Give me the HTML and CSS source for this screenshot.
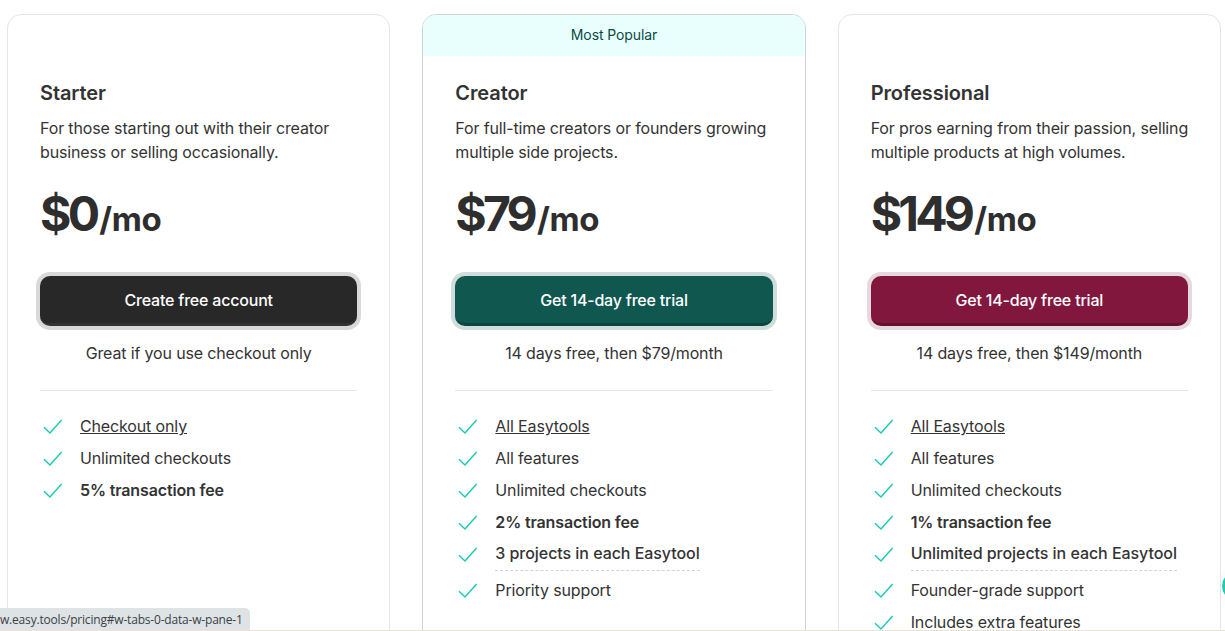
FILE: index.html
```html
<!DOCTYPE html>
<html lang="en">
<head>
<meta charset="utf-8">
<title>Pricing</title>
<link rel="stylesheet" href="styles.css">
</head>
<body>
<svg class="sprite" width="0" height="0" aria-hidden="true"><symbol id="check" viewBox="0 0 20 16"><path d="M1 8.2 7 14 18.6 1" fill="none" stroke="currentColor" stroke-width="1.5"/></symbol></svg>
<main class="plans">
  <section class="card">
    <div class="banner-slot"></div>
    <div class="body">
      <h2 class="name">Starter</h2>
      <p class="desc">For those starting out with their creator business or selling occasionally.</p>
      <div class="price"><span class="amount">$0</span><span class="per">/mo</span></div>
      <a class="btn btn-dark" href="#">Create free account</a>
      <p class="note">Great if you use checkout only</p>
      <hr class="rule">
      <ul class="feats">
        <li><svg class="tick"><use href="#check"/></svg><a class="ul" href="#">Checkout only</a></li>
        <li><svg class="tick"><use href="#check"/></svg><span>Unlimited checkouts</span></li>
        <li><svg class="tick"><use href="#check"/></svg><b>5% transaction fee</b></li>
      </ul>
    </div>
  </section>
  <section class="card popular">
    <div class="banner-slot banner">Most Popular</div>
    <div class="body">
      <h2 class="name">Creator</h2>
      <p class="desc">For full-time creators or founders growing multiple side projects.</p>
      <div class="price"><span class="amount">$79</span><span class="per">/mo</span></div>
      <a class="btn btn-teal" href="#">Get 14-day free trial</a>
      <p class="note">14 days free, then $79/month</p>
      <hr class="rule">
      <ul class="feats">
        <li><svg class="tick"><use href="#check"/></svg><a class="ul" href="#">All Easytools</a></li>
        <li><svg class="tick"><use href="#check"/></svg><span>All features</span></li>
        <li><svg class="tick"><use href="#check"/></svg><span>Unlimited checkouts</span></li>
        <li><svg class="tick"><use href="#check"/></svg><b>2% transaction fee</b></li>
        <li class="tip-row"><svg class="tick"><use href="#check"/></svg><span class="dashed">3 projects in each Easytool</span></li>
        <li class="after-tip"><svg class="tick"><use href="#check"/></svg><span>Priority support</span></li>
      </ul>
    </div>
  </section>
  <section class="card">
    <div class="banner-slot"></div>
    <div class="body">
      <h2 class="name">Professional</h2>
      <p class="desc">For pros earning from their passion, selling multiple products at high volumes.</p>
      <div class="price"><span class="amount">$149</span><span class="per">/mo</span></div>
      <a class="btn btn-maroon" href="#">Get 14-day free trial</a>
      <p class="note">14 days free, then $149/month</p>
      <hr class="rule">
      <ul class="feats">
        <li><svg class="tick"><use href="#check"/></svg><a class="ul" href="#">All Easytools</a></li>
        <li><svg class="tick"><use href="#check"/></svg><span>All features</span></li>
        <li><svg class="tick"><use href="#check"/></svg><span>Unlimited checkouts</span></li>
        <li><svg class="tick"><use href="#check"/></svg><b>1% transaction fee</b></li>
        <li class="tip-row"><svg class="tick"><use href="#check"/></svg><span class="dashed">Unlimited projects in each Easytool</span></li>
        <li class="after-tip"><svg class="tick"><use href="#check"/></svg><span>Founder-grade support</span></li>
        <li><svg class="tick"><use href="#check"/></svg><span>Includes extra features</span></li>
      </ul>
    </div>
  </section>
</main>
<div class="status">w.easy.tools/pricing#w-tabs-0-data-w-pane-1</div>
<div class="chat-dot"></div>
<div class="page-edge"></div>
</body>
</html>
```
FILE: styles.css
```css
* { box-sizing: border-box; }
html, body { height: 100%; }
body {
  margin: 0;
  height: 631px;
  overflow: hidden;
  background: #fff;
  color: #333;
  font-family: Inter, "Liberation Sans", sans-serif;
  font-size: 16px;
  line-height: 24px;
  position: relative;
}
.sprite { position: absolute; }
.plans {
  display: grid;
  grid-template-columns: repeat(3, 383.33px);
  column-gap: 32px;
  padding: 14px 0 0 7px;
}
.card {
  border: 1px solid #e6e6e6;
  border-radius: 14px;
  overflow: hidden;
  height: 660px;
}
.popular { border-color: #d2d2d2; }
.banner-slot { height: 41px; }
.banner {
  background: #e8fffd;
  color: #0c4a44;
  font-size: 14px;
  letter-spacing: -0.1px;
  line-height: 40px;
  text-align: center;
}
.body { padding: 23px 32px 0; }
.name { margin: 0; font-size: 20px; line-height: 28px; font-weight: 600; letter-spacing: -0.1px; color: #333; }
.desc { margin: 9px -8px 0 0; letter-spacing: -0.14px; }
.price { margin-top: 20px; height: 60px; display: flex; align-items: baseline; line-height: 60px; color: #2e2e2e; }
.amount { font-size: 48px; font-weight: 700; letter-spacing: -3.8px; }
.per { font-size: 33px; font-weight: 700; letter-spacing: -0.3px; margin-left: 3px; }
.btn {
  display: block;
  margin-top: 32px;
  height: 50px;
  line-height: 48px;
  border-radius: 10px;
  text-align: center;
  color: #fff;
  text-decoration: none;
  font-weight: 500;
  letter-spacing: -0.2px;
}
.btn-dark { background: #282828; border-bottom: 3px solid #333; box-shadow: 0 0 0 4px #d9d9d9; }
.btn-teal { background: #0f574f; border-bottom: 3px solid #0a4640; box-shadow: 0 0 0 4px #cfdddb; }
.btn-maroon { background: #82173d; border-bottom: 3px solid #66102f; box-shadow: 0 0 0 4px #e6d9de; }
.note { margin: 15px 0 0; text-align: center; letter-spacing: -0.15px; }
.rule { margin: 25px 0 0; border: 0; border-top: 1px solid #e6e6e6; }
.feats { list-style: none; margin: 23px 0 0; padding: 0; display: flex; flex-direction: column; gap: 8px; letter-spacing: -0.14px; }
.feats li { display: flex; align-items: flex-start; height: 24px; }
.tick { width: 20px; height: 16px; margin: 5px 17px 0 3px; flex: none; color: #1ecbb0; }
.ul { color: #333; text-decoration: underline; }
.feats b { font-weight: 600; }
.tip-row { margin-top: -1px; }
.tip-row .tick { margin-top: 6px; }
.dashed { display: block; height: 30px; padding-bottom: 5px; border-bottom: 1px dashed #d4d4d4; font-weight: 500; letter-spacing: -0.05px; }
.after-tip { margin-top: 5px; }
.status {
  position: absolute;
  left: 0;
  bottom: 1px;
  height: 22px;
  width: 250px;
  background: #dee4e6;
  border-top-right-radius: 5px;
  color: #3c4043;
  font-family: "Open Sans", sans-serif;
  font-size: 12px;
  letter-spacing: -0.19px;
  line-height: 23px;
  white-space: nowrap;
}
.chat-dot {
  position: absolute;
  left: 1222px;
  top: 572px;
  width: 28px;
  height: 28px;
  border-radius: 50%;
  background: #1ecbb0;
  box-shadow: 0 0 12px rgba(0, 0, 0, 0.06);
}
.page-edge { position: absolute; left: 0; right: 0; bottom: 0; height: 1px; background: #e8e2d8; }
```
